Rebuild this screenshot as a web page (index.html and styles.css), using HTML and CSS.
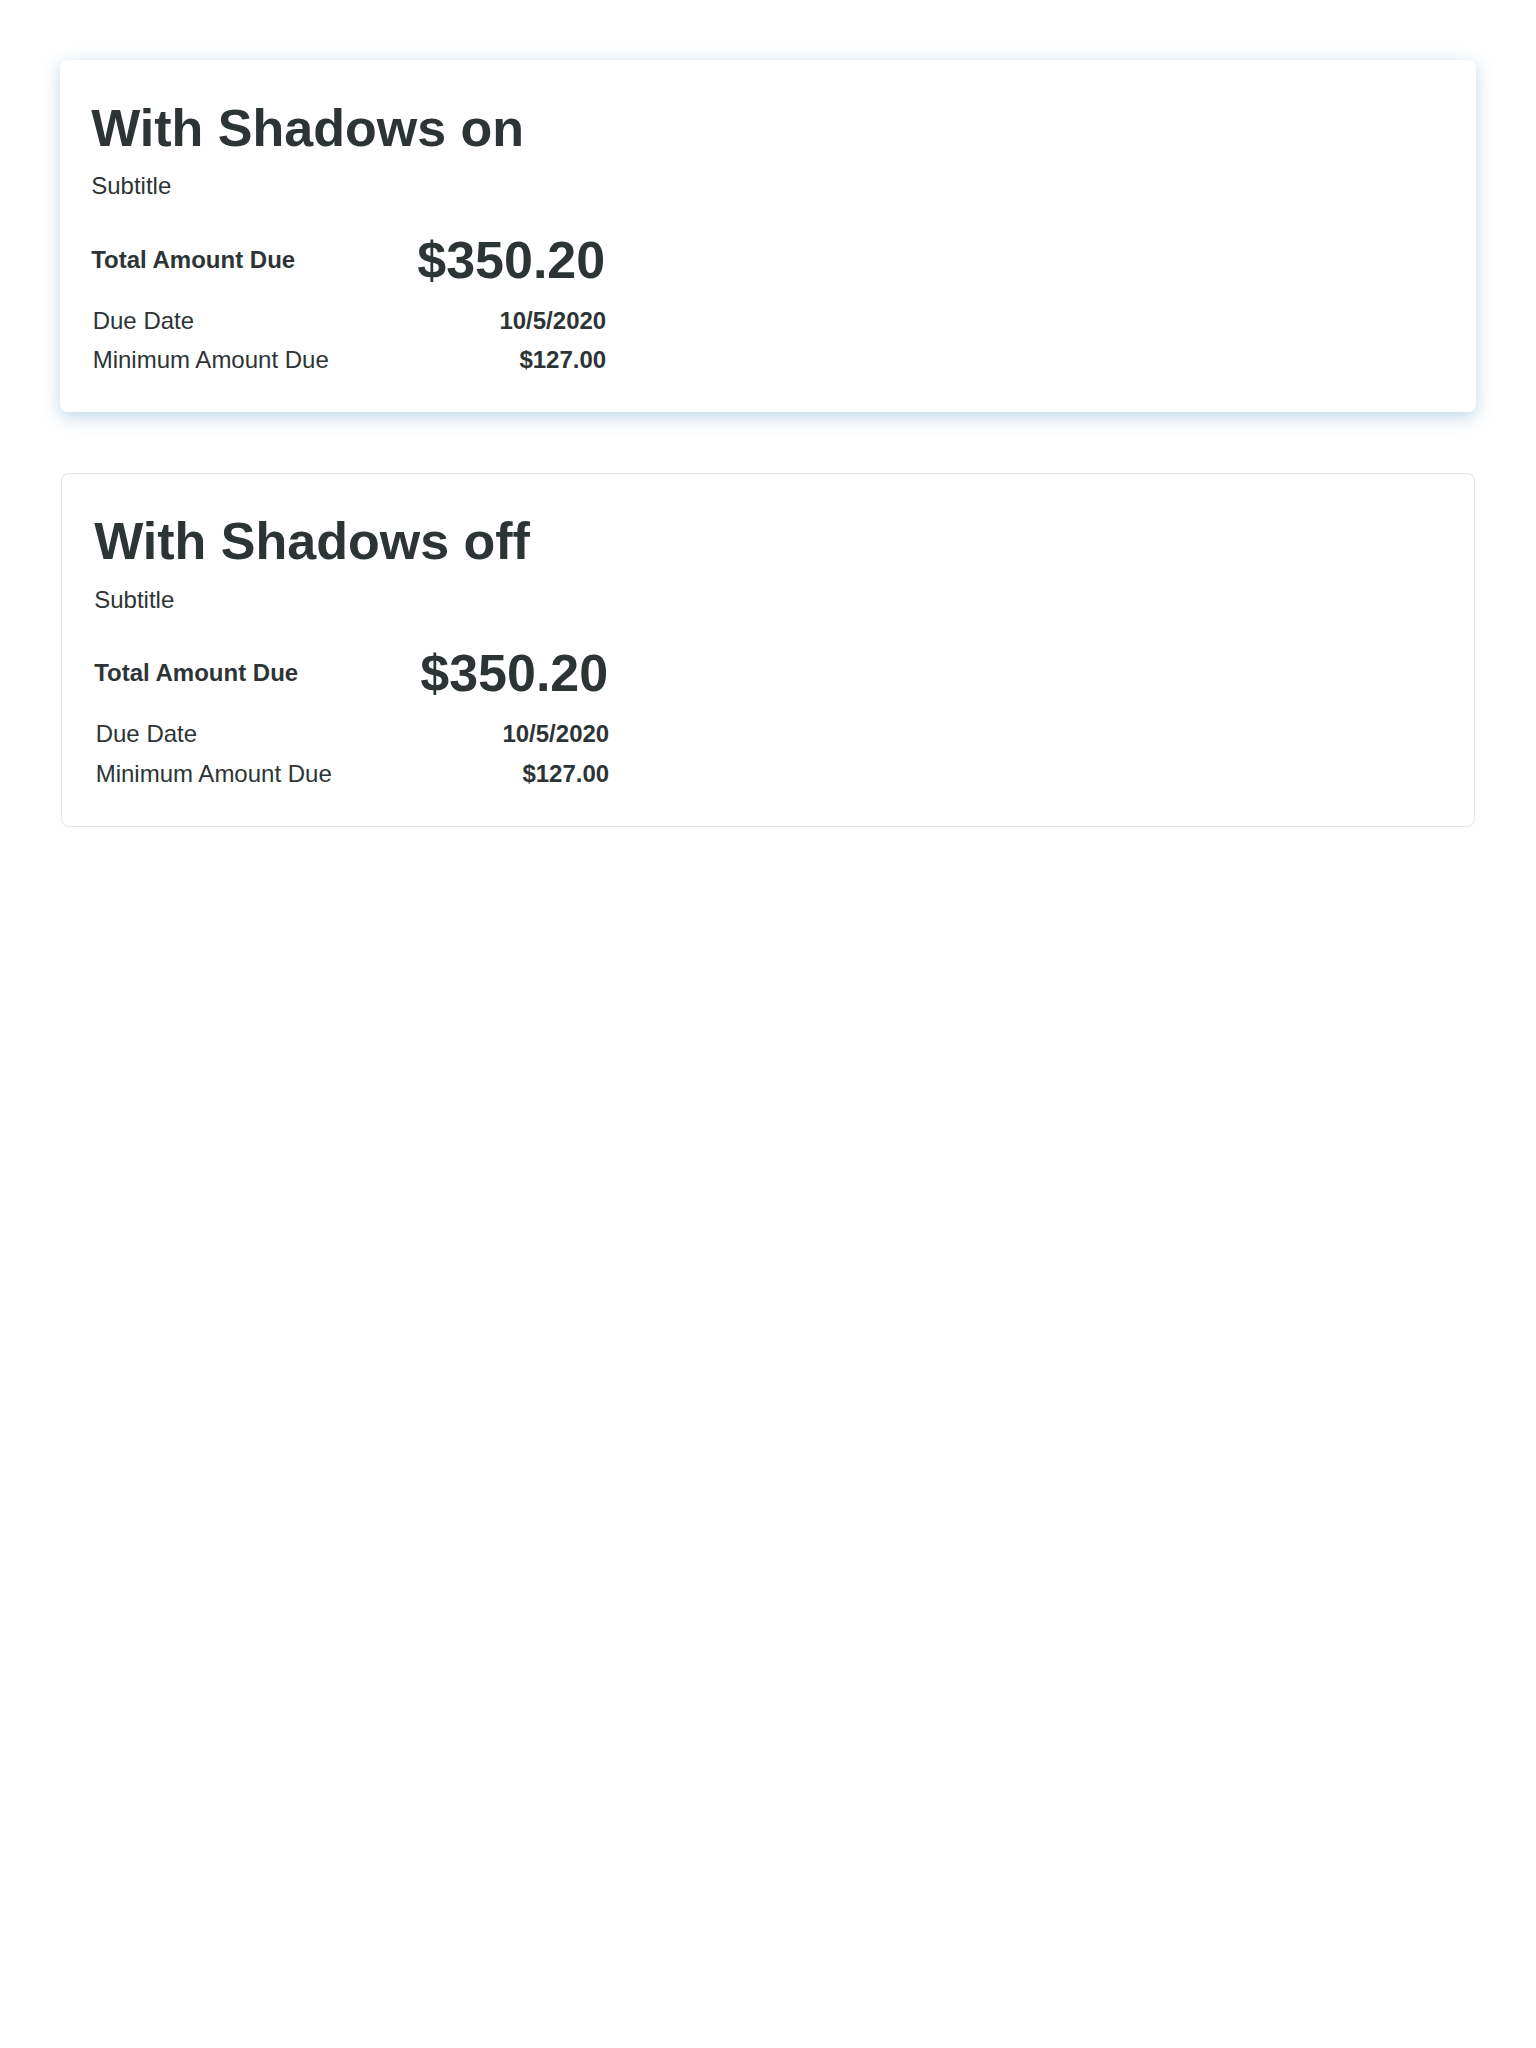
FILE: index.html
```html
<!DOCTYPE html>
<html>
<head>
<meta charset="utf-8">
<link rel="stylesheet" href="styles.css">
</head>
<body>
<div class="page">
  <section class="card card-shadow">
    <h1 class="card-title">With Shadows on</h1>
    <p class="card-subtitle">Subtitle</p>
    <div class="summary">
      <div class="total-row">
        <span class="total-label">Total Amount Due</span>
        <span class="total-value">$350.20</span>
      </div>
      <div class="detail-row"><span class="detail-label">Due Date</span><span class="detail-value">10/5/2020</span></div>
      <div class="detail-row"><span class="detail-label">Minimum Amount Due</span><span class="detail-value">$127.00</span></div>
    </div>
  </section>
  <section class="card card-flat">
    <h1 class="card-title">With Shadows off</h1>
    <p class="card-subtitle">Subtitle</p>
    <div class="summary">
      <div class="total-row">
        <span class="total-label">Total Amount Due</span>
        <span class="total-value">$350.20</span>
      </div>
      <div class="detail-row"><span class="detail-label">Due Date</span><span class="detail-value">10/5/2020</span></div>
      <div class="detail-row"><span class="detail-label">Minimum Amount Due</span><span class="detail-value">$127.00</span></div>
    </div>
  </section>
</div>
</body>
</html>
```
FILE: styles.css
```css
html, body {
  margin: 0;
  padding: 0;
  background: #ffffff;
}
body {
  font-family: "Liberation Sans", Arial, sans-serif;
  color: #2d3436;
  font-size: 24px;
}
.page {
  padding: 60px 60px 0 60px;
  display: flex;
  flex-direction: column;
  gap: 61px;
}
.card {
  background: #fff;
  border-radius: 8px;
  padding: 31.2px;
}
.card-shadow {
  box-shadow: 0 5px 18px rgba(55, 130, 175, 0.32);
}
.card-flat {
  margin: 0 1px;
  border: 1px solid #dfe6e9;
  padding-left: 32.2px;
  padding-bottom: 31.8px;
}
.card-title {
  margin: 6.6px 0 0 0;
  font-size: 52px;
  line-height: normal;
  font-weight: 700;
}
.card-subtitle {
  margin: 14.5px 0 0 0;
  font-size: 24px;
  line-height: normal;
}
.summary {
  width: 515px;
  margin-top: 29.5px;
}
.total-row {
  display: flex;
  justify-content: space-between;
  align-items: center;
  margin-bottom: 11px;
}
.total-label {
  font-weight: 700;
}
.total-value {
  font-size: 52px;
  font-weight: 700;
  margin-right: 1px;
}
.detail-row {
  display: flex;
  justify-content: space-between;
  padding: 5.9px 0 5.9px 1.5px;
}
.detail-value {
  font-weight: 700;
}
```
